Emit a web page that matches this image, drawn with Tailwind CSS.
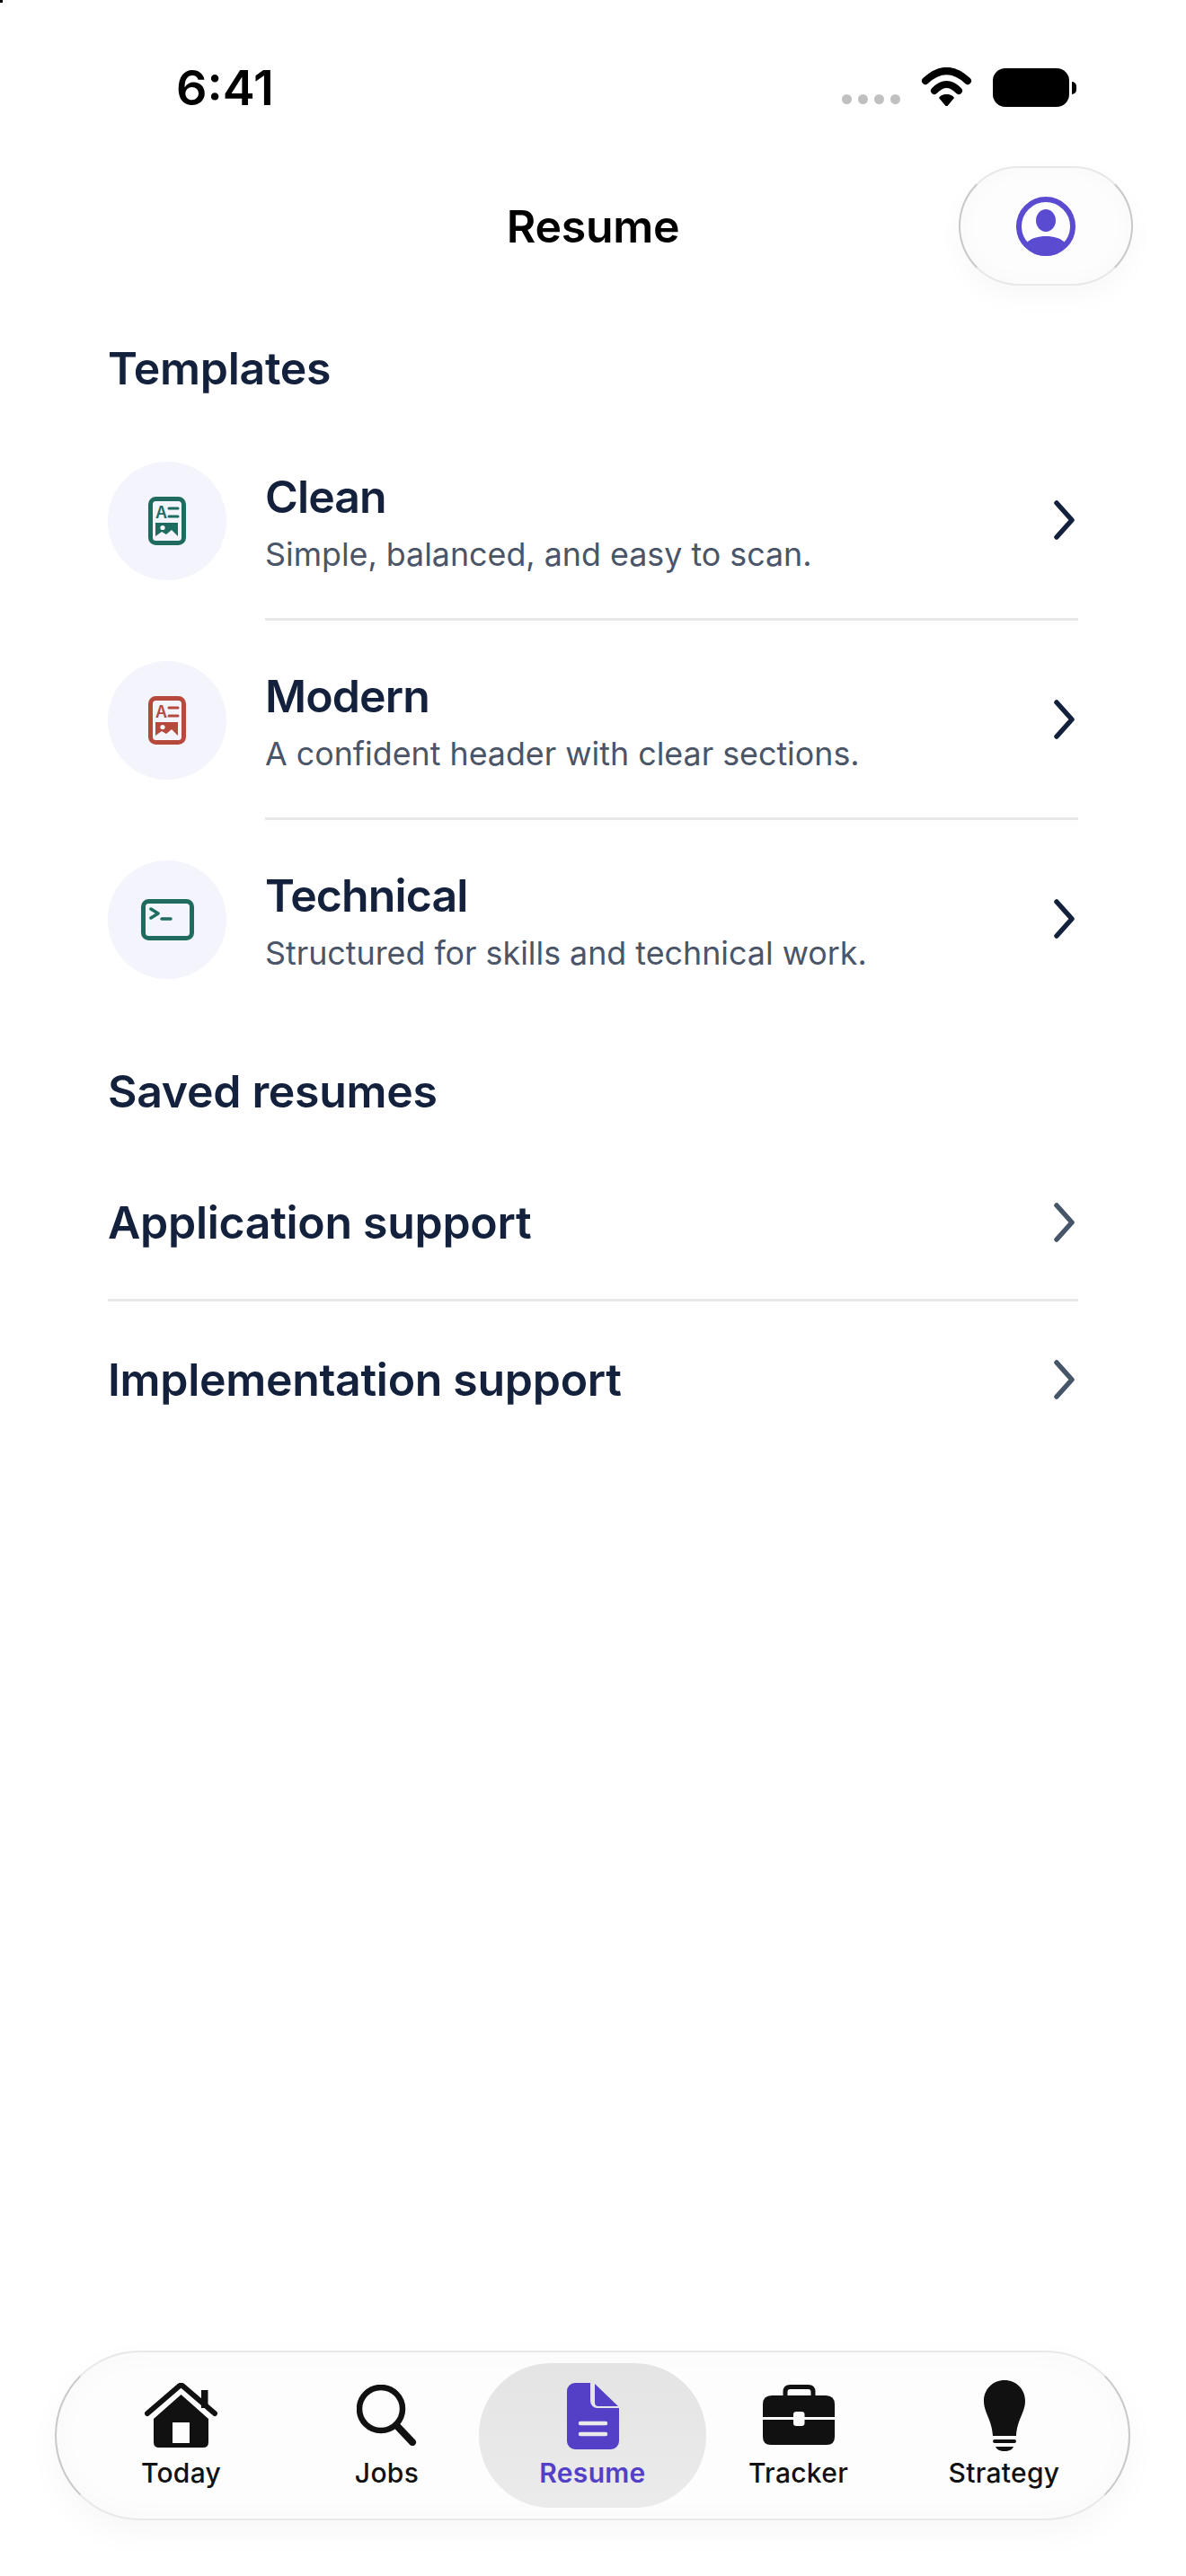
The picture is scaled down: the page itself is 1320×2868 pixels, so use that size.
<!DOCTYPE html>
<html lang="en">
  <head>
    <meta charset="UTF-8" />
    <meta name="viewport" content="width=device-width, initial-scale=1.0" />
    <title>Resume</title>
    <script src="https://cdn.jsdelivr.net/npm/@tailwindcss/browser@4"></script>
  </head>
  <body class="bg-white font-['Inter',sans-serif]">
    <div class="relative flex flex-col h-[2868px] w-[1320px] overflow-hidden">
      <span class="absolute top-0 left-0 w-[3px] h-[3px] bg-black"></span>

      <!-- Status bar -->
      <div class="flex justify-between h-[130px] pl-[196px] pr-[122px] pt-[66px]">
        <span class="text-[54px] leading-[64px] font-semibold text-black">6:41</span>
        <div class="flex items-start pt-[9px]">
          <div class="flex gap-[7px] mt-[30px] mr-[23px]">
            <span class="w-[11px] h-[11px] rounded-full bg-[#c0c0c0]"></span>
            <span class="w-[11px] h-[11px] rounded-full bg-[#c0c0c0]"></span>
            <span class="w-[11px] h-[11px] rounded-full bg-[#c0c0c0]"></span>
            <span class="w-[11px] h-[11px] rounded-full bg-[#c0c0c0]"></span>
          </div>
          <svg class="w-[57px] h-[43px] mr-[23px]" viewBox="0 0 57 43">
            <path d="M5 15Q28.5-7 52 15" fill="none" stroke="#000" stroke-width="8" stroke-linecap="round" />
            <path d="M15 26Q28.5 12 42 26" fill="none" stroke="#000" stroke-width="8" stroke-linecap="round" />
            <path d="M28.5 30C33 30 36 32 37 34L29.5 43H27.5L20 34C21 32 24 30 28.5 30Z" fill="#000" />
          </svg>
          <div class="flex items-center mt-[1px]">
            <span class="w-[85px] h-[43px] rounded-[14px] bg-black"></span>
            <span class="w-[5px] h-[14px] ml-[3px] rounded-r-[5px] bg-black"></span>
          </div>
        </div>
      </div>

      <!-- Header -->
      <header class="grid grid-cols-[194px_1fr_194px] items-center h-[133px] mt-[55px] px-[59px]">
        <span></span>
        <h1 class="text-center text-[50px] leading-[60px] tracking-[-0.3px] font-semibold text-black">Resume</h1>
        <button class="flex items-center justify-center w-[194px] h-[133px] rounded-[67px] bg-[#fdfdfd] border-[2px] border-y-[#e8e8e8] border-x-[#c8c8c8] shadow-[0_12px_30px_rgba(0,0,0,0.03),inset_0_0_26px_rgba(0,0,0,0.025)]">
          <svg class="w-[66px] h-[66px]" viewBox="0 0 66 66">
            <defs>
              <clipPath id="avatarClip"><circle cx="33" cy="33" r="33" /></clipPath>
            </defs>
            <circle cx="33" cy="33" r="30" fill="none" stroke="#5b4bd0" stroke-width="6" />
            <ellipse cx="33" cy="26.5" rx="11" ry="12.5" fill="#5b4bd0" />
            <path d="M12 51C17 46 24 44 33 44S49 46 54 51L50 66H16Z" fill="#5b4bd0" clip-path="url(#avatarClip)" />
          </svg>
        </button>
      </header>

      <main class="flex-1 px-[120px]">
        <h2 class="mt-[62px] text-[50px] leading-[60px] tracking-[-0.3px] font-semibold text-[#14213d]">Templates</h2>

        <!-- Templates -->
        <ul class="mt-[29px]">
          <li class="flex items-center h-[222px]">
            <div class="flex items-center justify-center w-[132px] h-[132px] mr-[43px] shrink-0 rounded-full bg-[#f3f4fc]">
              <svg class="w-[42px] h-[54px]" viewBox="0 0 42 54">
                <rect x="2.5" y="2.5" width="37" height="49" rx="6" fill="none" stroke="#206b60" stroke-width="5" />
                <text x="8" y="24" font-family="Inter" font-size="18" font-weight="600" fill="#206b60">A</text>
                <path d="M23 13H33M23 22H33" stroke="#206b60" stroke-width="3" stroke-linecap="round" />
                <path d="M8 29H33V44L26 37L20 42L15 39L8 44Z" fill="#206b60" />
                <circle cx="16" cy="34.5" r="2.6" fill="#fff" />
              </svg>
            </div>
            <div class="flex flex-1 items-center justify-between h-full border-b-[3px] border-[#e8e8e8] pr-[3px]">
              <div class="pt-[4px]">
                <h3 class="text-[50px] leading-[62px] tracking-[-0.9px] font-semibold text-[#14213d]">Clean</h3>
                <p class="mt-[10px] text-[35.8px] leading-[46px] text-[#4a5568]">Simple, balanced, and easy to scan.</p>
              </div>
              <svg class="w-[24px] h-[44px]" viewBox="0 0 24 44"><path d="M3 3L20 22L3 41" fill="none" stroke="#14213d" stroke-width="5.500" stroke-linecap="round" stroke-linejoin="round" /></svg>
            </div>
          </li>
          <li class="flex items-center h-[222px]">
            <div class="flex items-center justify-center w-[132px] h-[132px] mr-[43px] shrink-0 rounded-full bg-[#f3f4fc]">
              <svg class="w-[42px] h-[54px]" viewBox="0 0 42 54">
                <rect x="2.5" y="2.5" width="37" height="49" rx="6" fill="none" stroke="#b54a3c" stroke-width="5" />
                <text x="8" y="24" font-family="Inter" font-size="18" font-weight="600" fill="#b54a3c">A</text>
                <path d="M23 13H33M23 22H33" stroke="#b54a3c" stroke-width="3" stroke-linecap="round" />
                <path d="M8 29H33V44L26 37L20 42L15 39L8 44Z" fill="#b54a3c" />
                <circle cx="16" cy="34.5" r="2.6" fill="#fff" />
              </svg>
            </div>
            <div class="flex flex-1 items-center justify-between h-full border-b-[3px] border-[#e8e8e8] pr-[3px]">
              <div class="pt-[4px]">
                <h3 class="text-[50px] leading-[62px] tracking-[-0.9px] font-semibold text-[#14213d]">Modern</h3>
                <p class="mt-[10px] text-[35.8px] leading-[46px] text-[#4a5568]">A confident header with clear sections.</p>
              </div>
              <svg class="w-[24px] h-[44px]" viewBox="0 0 24 44"><path d="M3 3L20 22L3 41" fill="none" stroke="#14213d" stroke-width="5.500" stroke-linecap="round" stroke-linejoin="round" /></svg>
            </div>
          </li>
          <li class="flex items-center h-[222px]">
            <div class="flex items-center justify-center w-[132px] h-[132px] mr-[43px] shrink-0 rounded-full bg-[#f3f4fc]">
              <svg class="w-[59px] h-[46px]" viewBox="0 0 59 46">
                <rect x="2.5" y="2.5" width="54" height="41" rx="6" fill="none" stroke="#206b60" stroke-width="5" />
                <path d="M11 11L19 16L11 21" fill="none" stroke="#206b60" stroke-width="3.5" stroke-linecap="round" stroke-linejoin="round" />
                <path d="M23 22H33" stroke="#206b60" stroke-width="3.5" stroke-linecap="round" />
              </svg>
            </div>
            <div class="flex flex-1 items-center justify-between h-full border-b-[3px] border-transparent pr-[3px]">
              <div class="pt-[4px]">
                <h3 class="text-[50px] leading-[62px] tracking-[-0.9px] font-semibold text-[#14213d]">Technical</h3>
                <p class="mt-[10px] text-[35.8px] leading-[46px] text-[#4a5568]">Structured for skills and technical work.</p>
              </div>
              <svg class="w-[24px] h-[44px]" viewBox="0 0 24 44"><path d="M3 3L20 22L3 41" fill="none" stroke="#14213d" stroke-width="5.500" stroke-linecap="round" stroke-linejoin="round" /></svg>
            </div>
          </li>
        </ul>

        <h2 class="mt-[50px] text-[50px] leading-[60px] tracking-[-0.3px] font-semibold text-[#14213d]">Saved resumes</h2>

        <!-- Saved resumes -->
        <ul class="mt-[30px]">
          <li class="flex items-center justify-between h-[174px] border-b-[3px] border-[#e8e8e8] pr-[3px]">
            <span class="text-[50px] leading-[60px] tracking-[-0.3px] font-semibold text-[#14213d]">Application support</span>
            <svg class="w-[24px] h-[44px]" viewBox="0 0 24 44"><path d="M3 3L20 22L3 41" fill="none" stroke="#475569" stroke-width="5.500" stroke-linecap="round" stroke-linejoin="round" /></svg>
          </li>
          <li class="flex items-center justify-between h-[174px] pr-[3px]">
            <span class="text-[50px] leading-[60px] tracking-[-0.3px] font-semibold text-[#14213d]">Implementation support</span>
            <svg class="w-[24px] h-[44px]" viewBox="0 0 24 44"><path d="M3 3L20 22L3 41" fill="none" stroke="#475569" stroke-width="5.500" stroke-linecap="round" stroke-linejoin="round" /></svg>
          </li>
        </ul>
      </main>

      <!-- Tab bar -->
      <nav class="grid grid-cols-5 items-center h-[189px] ml-[61px] mr-[62px] mb-[62px] px-[24px] rounded-[95px] bg-[#fdfdfd] border-[2px] border-y-[#e8e8e8] border-x-[#c8c8c8] shadow-[0_14px_36px_rgba(0,0,0,0.035),inset_0_0_34px_rgba(0,0,0,0.025)]">
        <a class="flex flex-col items-center justify-end h-[161px] pb-[21px] text-[#111]">
          <svg class="w-[81px] h-[72px] mb-[10px]" viewBox="0 0 81 72">
            <path d="M63 8H70.5V28H63Z" fill="#111" />
            <path d="M3 34L38.5 3.5Q40.5 2 42.5 3.5L78 34" fill="none" stroke="#111" stroke-width="6" stroke-linecap="round" stroke-linejoin="round" />
            <path d="M40.5 13L71 40V66Q71 72 65 72H16Q10 72 10 66V40ZM31 44V67H50V44Z" fill="#111" fill-rule="evenodd" />
          </svg>
          <span class="text-[30px] leading-[36px] tracking-[0.3px] font-medium">Today</span>
        </a>
        <a class="flex flex-col items-center justify-end h-[161px] pb-[21px] text-[#111]">
          <svg class="w-[67px] h-[68px] mb-[12px]" viewBox="0 0 67 68">
            <circle cx="27" cy="27" r="24" fill="none" stroke="#111" stroke-width="6.5" />
            <path d="M44 45L62 64" stroke="#111" stroke-width="8" stroke-linecap="round" />
          </svg>
          <span class="text-[30px] leading-[36px] tracking-[0.3px] font-medium">Jobs</span>
        </a>
        <a class="flex flex-col items-center justify-end h-[161px] -mx-[12px] pb-[21px] rounded-[80px] bg-gradient-to-b from-[#e4e4e4] to-[#ebebeb] text-[#5340c6]">
          <svg class="w-[58px] h-[74px] mb-[8px]" viewBox="0 0 58 74">
            <path d="M9 0H26V20A8 8 0 0 0 34 28H58V65A9 9 0 0 1 49 74H9A9 9 0 0 1 0 65V9A9 9 0 0 1 9 0Z" fill="#5340c6" />
            <path d="M31 1L57 26H35A4 4 0 0 1 31 22Z" fill="#5340c6" />
            <path d="M15 45H43M15 57H43" stroke="#e9e9e9" stroke-width="4.5" stroke-linecap="round" />
          </svg>
          <span class="text-[30px] leading-[36px] tracking-[0.3px] font-semibold">Resume</span>
        </a>
        <a class="flex flex-col items-center justify-end h-[161px] pb-[21px] text-[#111]">
          <svg class="w-[80px] h-[67px] mb-[13px]" viewBox="0 0 80 67">
            <path d="M25 13V8Q25 2.5 30.5 2.5H50.5Q56 2.500 56 8V13" fill="none" stroke="#111" stroke-width="5" />
            <path d="M10 12H70Q80 12 80 22V36H46.500V33Q46.500 30 43 30H37.500Q34 30 34 33V36H0V22Q0 12 10 12Z" fill="#111" />
            <path d="M0 39H34V43Q34 46 37.500 46H43Q46.500 46 46.500 43V39H80V58Q80 67 71 67H9Q0 67 0 58Z" fill="#111" />
          </svg>
          <span class="text-[30px] leading-[36px] tracking-[0.3px] font-medium">Tracker</span>
        </a>
        <a class="flex flex-col items-center justify-end h-[161px] pb-[21px] text-[#111]">
          <svg class="w-[46px] h-[79px] mb-[6px]" viewBox="0 0 46 79">
            <path d="M23 0C36 0 46 10 46 23C46 36 37 44 36 62H10C9 44 0 36 0 23C0 10 10 0 23 0Z" fill="#111" />
            <rect x="10" y="66" width="26" height="4" rx="2" fill="#111" />
            <path d="M13 74H33C32 77 28 79 23 79S14 77 13 74Z" fill="#111" />
          </svg>
          <span class="text-[30px] leading-[36px] tracking-[0.3px] font-medium">Strategy</span>
        </a>
      </nav>
    </div>
  </body>
</html>
